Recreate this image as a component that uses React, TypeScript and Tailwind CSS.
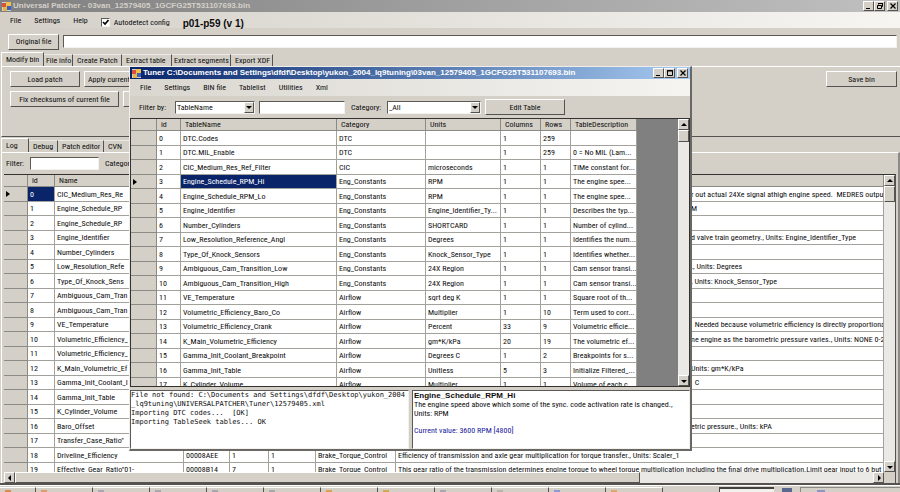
import type { ReactNode } from "react";

const RAISED =
  "border border-t-white border-l-white border-r-[#55534f] border-b-[#55534f] bg-[#d4d0c8]";
const SUNKEN =
  "border border-t-[#5c5a56] border-l-[#5c5a56] border-r-[#f4f2ee] border-b-[#f4f2ee] bg-white";

type PatchRow = {
  id: number;
  name: string;
  address?: string;
  columns?: string;
  rows?: string;
  category?: string;
  description?: string;
  tail?: string;
};

const patchRows: PatchRow[] = [
  { id: 0, name: "CIC_Medium_Res_Re", tail: "r out actual 24Xe signal athigh engine speed.  MEDRES outpu" },
  { id: 1, name: "Engine_Schedule_RP", tail: "M" },
  { id: 2, name: "Engine_Schedule_RP" },
  { id: 3, name: "Engine_Identifier", tail: "d valve train geometry., Units: Engine_Identifier_Type" },
  { id: 4, name: "Number_Cylinders" },
  { id: 5, name: "Low_Resolution_Refe", tail: "., Units: Degrees" },
  { id: 6, name: "Type_Of_Knock_Sens", tail: ", Units: Knock_Sensor_Type" },
  { id: 7, name: "Ambiguous_Cam_Tran" },
  { id: 8, name: "Ambiguous_Cam_Tran" },
  { id: 9, name: "VE_Temperature", tail: "  Needed because volumetric efficiency is directly proportiona" },
  { id: 10, name: "Volumetric_Efficiency_", tail: "ne engine as the barometric pressure varies., Units: NONE 0-2" },
  { id: 11, name: "Volumetric_Efficiency_" },
  { id: 12, name: "K_Main_Volumetric_Ef", tail: "Units: gm*K/kPa" },
  { id: 13, name: "Gamma_Init_Coolant_I", tail: "  C" },
  { id: 14, name: "Gamma_Init_Table" },
  { id: 15, name: "K_Cylinder_Volume" },
  { id: 16, name: "Baro_Offset", tail: "etric pressure., Units: kPA" },
  { id: 17, name: 'Transfer_Case_Ratio"' },
  {
    id: 18,
    name: "Driveline_Efficiency",
    address: "00008AEE",
    columns: "1",
    rows: "1",
    category: "Brake_Torque_Control",
    description:
      "Efficiency of transmission and axle gear multiplication for torque transfer., Units: Scaler_1",
  },
  {
    id: 19,
    name: 'Effective_Gear_Ratio"01-',
    address: "00008B14",
    columns: "7",
    rows: "1",
    category: "Brake_Torque_Control",
    description:
      "This gear ratio of the transmission determines engine torque to wheel torque multiplication including the final drive multiplication.Limit gear input to 6 but include",
  },
];

const tunerRows: string[][] = [
  ["0", "DTC.Codes", "DTC", "", "1", "259", ""],
  ["1", "DTC.MIL_Enable", "DTC", "", "1", "259", "0 = No MIL (Lam..."],
  ["2", "CIC_Medium_Res_Ref_Filter", "CIC", "microseconds", "1", "1", "TiMe constant for..."],
  ["3", "Engine_Schedule_RPM_Hi", "Eng_Constants", "RPM", "1", "1", "The engine spee..."],
  ["4", "Engine_Schedule_RPM_Lo", "Eng_Constants", "RPM", "1", "1", "The engine spee..."],
  ["5", "Engine_Identifier", "Eng_Constants", "Engine_Identifier_Ty...", "1", "1", "Describes the typ..."],
  ["6", "Number_Cylinders", "Eng_Constants", "SHORTCARD", "1", "1", "Number of cylind..."],
  ["7", "Low_Resolution_Reference_Angl", "Eng_Constants", "Degrees", "1", "1", "Identifies the num..."],
  ["8", "Type_Of_Knock_Sensors", "Eng_Constants", "Knock_Sensor_Type", "1", "1", "Identifies whether..."],
  ["9", "Ambiguous_Cam_Transition_Low", "Eng_Constants", "24X Region", "1", "1", "Cam sensor transi..."],
  ["10", "Ambiguous_Cam_Transition_High", "Eng_Constants", "24X Region", "1", "1", "Cam sensor transi..."],
  ["11", "VE_Temperature", "Airflow", "sqrt deg K", "1", "1", "Square root of th..."],
  ["12", "Volumetric_Efficiency_Baro_Co", "Airflow", "Multiplier", "1", "10", "Term used to corr..."],
  ["13", "Volumetric_Efficiency_Crank", "Airflow", "Percent", "33", "9", "Volumetric efficie..."],
  ["14", "K_Main_Volumetric_Efficiency", "Airflow", "gm*K/kPa", "20", "19", "The volumetric ef..."],
  ["15", "Gamma_Init_Coolant_Breakpoint", "Airflow", "Degrees C", "1", "2", "Breakpoints for s..."],
  ["16", "Gamma_Init_Table", "Airflow", "Unitless", "5", "3", "Initialize Filtered_..."],
  ["17", "K_Cylinder_Volume", "Airflow", "Multiplier", "1", "1", "Volume of each c..."],
];

function AppIcon() {
  return (
    <svg viewBox="0 0 9 9" className="size-[9px] shrink-0" aria-hidden="true">
      <rect x="0" y="0" width="9" height="9" fill="#c9cfe0" />
      <rect x="0" y="1" width="4" height="4" fill="#d9503c" />
      <rect x="4" y="0" width="5" height="5" fill="#f0c04a" />
      <rect x="1" y="5" width="4" height="4" fill="#e9b63c" />
      <rect x="5" y="4" width="4" height="4" fill="#3b62c0" />
    </svg>
  );
}

function WindowButton({ label, children }: { label: string; children: ReactNode }) {
  return (
    <button aria-label={label} className={`flex h-[10px] w-[11px] items-center justify-center ${RAISED}`}>
      <svg viewBox="0 0 8 8" className="size-2" fill="none" stroke="#000" aria-hidden="true">
        {children}
      </svg>
    </button>
  );
}

function WindowButtons({ restore = false }: { restore?: boolean }) {
  return (
    <div className="ml-auto flex pr-[2px]">
      <WindowButton label="Minimize">
        <path d="M1 6.5h4" />
      </WindowButton>
      {restore ? (
        <WindowButton label="Restore">
          <path d="M2.5 2.5v-1h4v3h-1M1.5 3.5h4v3h-4zM2 1.5h5" />
        </WindowButton>
      ) : (
        <WindowButton label="Maximize">
          <path d="M1.5 1.5h5v5h-5zM1 2h6" />
        </WindowButton>
      )}
      <div className="ml-[2px]">
        <WindowButton label="Close">
          <path d="M1.5 1.5l5 5M6.5 1.5l-5 5" strokeWidth="1.2" />
        </WindowButton>
      </div>
    </div>
  );
}

function Arrow({ dir }: { dir: "up" | "down" | "left" | "right" }) {
  const d = {
    up: "M0 4l3-3 3 3z",
    down: "M0 2l3 3 3-3z",
    left: "M4 0L1 3l3 3z",
    right: "M2 0l3 3-3 3z",
  }[dir];
  return (
    <svg viewBox="0 0 6 6" className="size-[6px]" fill="#000" aria-hidden="true">
      <path d={d} />
    </svg>
  );
}

function ScrollButton({ dir }: { dir: "up" | "down" | "left" | "right" }) {
  return (
    <button aria-label={`Scroll ${dir}`} className={`flex size-[11px] shrink-0 items-center justify-center ${RAISED}`}>
      <Arrow dir={dir} />
    </button>
  );
}

function PushButton({ children, className }: { children?: ReactNode; className: string }) {
  return (
    <button className={`h-4 shrink-0 overflow-hidden text-center leading-[13px] whitespace-nowrap ${RAISED} ${className}`}>
      {children}
    </button>
  );
}

function Menu({ items }: { items: string[] }) {
  return (
    <>
      {items.map((item) => (
        <button key={item}>{item}</button>
      ))}
    </>
  );
}

function Tab({ children, active = false, className = "" }: { children: ReactNode; active?: boolean; className?: string }) {
  return (
    <button
      role="tab"
      aria-selected={active}
      className={`pl-1 text-left whitespace-nowrap border-r border-r-[#55534f] ${
        active ? "h-[14px] border-t border-l border-t-white border-l-white" : "h-3 border-t border-t-[#eceae6]"
      } ${className}`}
    >
      {children}
    </button>
  );
}

function Combo({ id, value, className }: { id: string; value: string; className: string }) {
  return (
    <div className={`relative h-[13px] ${SUNKEN} ${className}`}>
      <select id={id} defaultValue={value} className="block h-[11px] w-full appearance-none bg-transparent pl-px leading-[11px] outline-none">
        <option>{value}</option>
      </select>
      <span className={`pointer-events-none absolute top-0 right-0 flex h-[11px] w-[10px] items-center justify-center ${RAISED}`}>
        <Arrow dir="down" />
      </span>
    </div>
  );
}

const HEAD = "h-3 overflow-hidden border-r border-b border-[#8c8a85] bg-[#d4d0c8] p-0 pl-1 text-left font-normal leading-[11px] whitespace-nowrap";
const CELL = "overflow-hidden border-r border-b border-[#a3a19c] p-0 pl-[2px] leading-[13px] whitespace-pre";
const GUTTER = "border-r border-b border-[#8c8a85] bg-[#d4d0c8] p-0 leading-[13px]";

function RowMarker() {
  return (
    <svg viewBox="0 0 4 6" className="ml-[2px] block h-[6px] w-1" aria-label="Current row">
      <path d="M0 0l4 3-4 3z" fill="#000" />
    </svg>
  );
}

function PatchTable() {
  return (
    <table className="w-full table-fixed border-separate border-spacing-0">
      <colgroup>
        <col className="w-6" />
        <col className="w-[27px]" />
        <col className="w-[129px]" />
        <col className="w-[46px]" />
        <col className="w-[39px]" />
        <col className="w-[47px]" />
        <col className="w-20" />
        <col />
      </colgroup>
      <thead>
        <tr>
          <th className={HEAD} />
          <th className={HEAD}>id</th>
          <th className={HEAD}>Name</th>
          <th className={HEAD} colSpan={5} />
        </tr>
      </thead>
      <tbody>
        {patchRows.map((row) => (
          <tr key={row.id} className="odd:h-[15px] even:h-[14px]">
            <td className={GUTTER}>{row.id === 0 && <RowMarker />}</td>
            <td className={`${CELL} ${row.id === 0 ? "bg-[#0a246a] text-white" : ""}`}>{row.id}</td>
            <td className={CELL}>{row.name}</td>
            <td className={CELL}>{row.address}</td>
            <td className={CELL}>{row.columns}</td>
            <td className={CELL}>{row.rows}</td>
            <td className={CELL}>{row.category}</td>
            <td className={CELL}>
              {row.tail ? <span className="pl-[293px]">{row.tail}</span> : row.description}
            </td>
          </tr>
        ))}
      </tbody>
    </table>
  );
}

function TunerTable() {
  return (
    <table className="w-[506px] table-fixed border-separate border-spacing-0 bg-white">
      <colgroup>
        <col className="w-[26px]" />
        <col className="w-6" />
        <col className="w-[156px]" />
        <col className="w-[89px]" />
        <col className="w-[75px]" />
        <col className="w-10" />
        <col className="w-[30px]" />
        <col className="w-[66px]" />
      </colgroup>
      <thead>
        <tr>
          <th className={HEAD} />
          {["id", "TableName", "Category", "Units", "Columns", "Rows", "TableDescription"].map((h) => (
            <th key={h} className={HEAD}>{h}</th>
          ))}
        </tr>
      </thead>
      <tbody>
        {tunerRows.map((row) => (
          <tr key={row[0]} className="odd:h-[15px] even:h-[14px]">
            <td className={GUTTER}>{row[0] === "3" && <RowMarker />}</td>
            {row.map((value, i) => (
              <td key={i} className={`${CELL} ${row[0] === "3" && i === 1 ? "bg-[#0a246a] text-white" : ""}`}>
                {value}
              </td>
            ))}
          </tr>
        ))}
      </tbody>
    </table>
  );
}

function TunerWindow() {
  return (
    <section className="absolute top-[66px] left-[129px] flex h-[385px] w-[563px] flex-col border-t border-r-2 border-b-2 border-l border-t-[#f0eeea] border-r-[#6a6864] border-b-[#6a6864] border-l-[#f0eeea] bg-[#d4d0c8]">
      <header className="flex h-3 shrink-0 items-center gap-[2px] bg-linear-to-r from-[#0a246a] to-[#a6caf0] pl-[2px]">
        <AppIcon />
        <h2 className="font-['Liberation_Sans',Arial,sans-serif] text-[8px] leading-3 font-bold whitespace-nowrap text-white">
          Tuner C:\Documents and Settings\dfdf\Desktop\yukon_2004_lq9tuning\03van_12579405_1GCFG25T531107693.bin
        </h2>
        <WindowButtons />
      </header>
      <nav className="flex h-[17px] shrink-0 items-center gap-[13px] bg-linear-to-r from-[#d9d6cf] to-[#f5f4f1] pl-[10px]">
        <Menu items={["File", "Settings", "BIN file", "Tablelist", "Utilities", "Xml"]} />
      </nav>
      <div className="flex h-[22px] shrink-0 items-center pl-[9px]">
        <label htmlFor="filter-by" className="w-9">Filter by:</label>
        <Combo id="filter-by" value="TableName" className="w-[80px]" />
        <input aria-label="Filter text" className={`ml-1 h-[13px] w-[86px] ${SUNKEN}`} />
        <label htmlFor="category" className="ml-[6px] w-9">Category:</label>
        <Combo id="category" value="_All" className="w-[94px]" />
        <PushButton className="ml-1 w-[80px]">Edit Table</PushButton>
      </div>
      <div className="flex min-h-0 flex-1 border border-[#33322f] bg-[#808080]">
        <div className="min-w-0 flex-1 overflow-hidden">
          <TunerTable />
        </div>
        <div className="flex w-[11px] flex-col bg-[#ebe9e5]">
          <ScrollButton dir="up" />
          <div className={`h-3 ${RAISED}`} />
          <div className="flex-1" />
          <ScrollButton dir="down" />
        </div>
      </div>
      <div className="mt-[3px] flex h-[59px] shrink-0 gap-[3px]">
        <div className={`w-[279px] overflow-hidden font-['DejaVu_Sans_Mono','Liberation_Mono',monospace] text-[7px] leading-[9px] whitespace-pre ${SUNKEN}`}>
          {"File not found: C:\\Documents and Settings\\dfdf\\Desktop\\yukon_2004\n_lq9tuning\\UNIVERSALPATCHER\\Tuner\\12579405.xml\nImporting DTC codes...  [OK]\nImporting TableSeek tables... OK"}
        </div>
        <div className={`min-w-0 flex-1 pl-px leading-[9px] ${SUNKEN}`}>
          <h3 className="font-['Liberation_Sans',Arial,sans-serif] text-[8px] font-bold">Engine_Schedule_RPM_Hi</h3>
          <p>The engine speed above which some of the sync. code activation rate is changed.,</p>
          <p>Units: RPM</p>
          <p className="mt-2 text-[#2020a0]">Current value: 3600 RPM [4800]</p>
        </div>
      </div>
    </section>
  );
}

const TASK_ICONS = [
  "bg-[#e08a4a]", "bg-[#e09a6a]", "bg-[#a8a8b0]", "bg-[#a8a8b0]", "bg-[#a8a8b0]", "bg-[#a8a8b0]",
  "bg-[#e0a050]", "bg-[#d8a850]", "bg-[#a8a8b0]", "bg-[#b8b4ac]", "bg-[#8a9cd0]", "bg-[#e0a868]",
];

function Taskbar() {
  return (
    <footer className="flex h-[7px] shrink-0 items-end border-t border-white bg-[#d4d0c8]">
      {TASK_ICONS.map((color, i) => (
        <div key={i} className={`flex h-[5px] items-end border-t border-r border-t-white border-r-[#55534f] pl-[5px] ${i === 0 ? "w-9" : "w-[57px]"}`}>
          <span className={`h-[2px] w-[6px] ${color}`} />
        </div>
      ))}
      <div className="ml-14 h-[5px] w-[55px] border-t-2 border-l border-[#44423f] bg-[#f3f1ed]" />
      <div className="ml-2 h-1 w-[10px] bg-[#5a6890]" />
      <div className="ml-2 flex h-[5px] flex-1 items-end border-t border-l border-[#8c8a85] pl-4">
        <span className="h-[2px] w-2 bg-[#8f93c8]" />
      </div>
    </footer>
  );
}

export default function App() {
  return (
    <main className="relative flex h-screen flex-col overflow-hidden bg-[#d4d0c8] font-['Roboto_Condensed','Liberation_Sans_Narrow',Roboto,sans-serif] text-[8px] leading-[11px] text-[#0c0c0c]">
      <header className="flex h-3 shrink-0 items-center gap-[2px] bg-linear-to-r from-[#808080] to-[#c0c0c0] pl-[2px]">
        <AppIcon />
        <h1 className="font-['Liberation_Sans',Arial,sans-serif] text-[8px] leading-3 font-bold whitespace-nowrap text-[#d4d0c8]">
          Universal Patcher - 03van_12579405_1GCFG25T531107693.bin
        </h1>
        <WindowButtons restore />
      </header>
      <nav className="flex h-4 shrink-0 items-center gap-[13px] bg-linear-to-r from-[#d4d0c8] to-[#f6f5f2] pl-[10px]">
        <Menu items={["File", "Settings", "Help"]} />
        <label className="relative flex items-center gap-1 pt-1">
          <input type="checkbox" defaultChecked className={`peer size-[9px] appearance-none ${SUNKEN}`} />
          <svg viewBox="0 0 7 7" className="pointer-events-none invisible absolute left-px size-[7px] peer-checked:visible" fill="none" stroke="#000" strokeWidth="1.6" aria-hidden="true">
            <path d="M1 3l2 2 3.500-4" />
          </svg>
          Autodetect config
        </label>
        <strong className="pt-2 font-['Liberation_Sans',Arial,sans-serif] text-[10px] leading-3">p01-p59 (v 1)</strong>
      </nav>
      <div className="flex h-6 shrink-0 items-center gap-1 pt-[3px] pr-[3px] pl-2">
        <PushButton className="w-[51px]">Original file</PushButton>
        <input aria-label="Original file path" className={`h-[13px] min-w-0 flex-1 ${SUNKEN}`} />
      </div>
      <div role="tablist" className="flex h-[14px] shrink-0 items-end pl-px">
        <Tab active className="w-[43px]">Modify bin</Tab>
        <Tab className="w-[29px] pl-[2px]">File info</Tab>
        <Tab className="w-[49px]">Create Patch</Tab>
        <Tab className="w-[50px]">Extract table</Tab>
        <Tab className="w-[59px] pl-[2px]">Extract segments</Tab>
        <Tab className="w-[42px]">Export XDF</Tab>
      </div>
      <section className="ml-px flex h-[71px] shrink-0 flex-col gap-1 border-t border-b border-l border-t-white border-b-[#55534f] border-l-white pt-1 pr-[3px] pl-2">
        <div className="flex gap-1">
          <PushButton className="w-[70px]">Load patch</PushButton>
          <PushButton className="w-[100px] pl-[3px] text-left">Apply current patch</PushButton>
          <PushButton className="ml-auto w-[71px]">Save bin</PushButton>
        </div>
        <div className="flex gap-1">
          <PushButton className="w-[109px]">Fix checksums of current file</PushButton>
          <PushButton className="w-[60px]" />
        </div>
      </section>
      <div role="tablist" className="mt-px flex h-[14px] shrink-0 items-end pl-px">
        <Tab active className="w-[28px]">Log</Tab>
        <Tab className="w-[29px]">Debug</Tab>
        <Tab className="w-[46px]">Patch editor</Tab>
        <Tab className="w-[40px]">CVN</Tab>
      </div>
      <section className="ml-px flex min-h-0 flex-1 flex-col border-t border-r-2 border-l border-t-white border-r-[#8c8a85] border-l-white">
        <div className="flex h-[21px] shrink-0 items-center pl-1">
          <label htmlFor="filter" className="w-6">Filter:</label>
          <input id="filter" className={`h-[13px] w-[69px] ${SUNKEN}`} />
          <span className="ml-[6px]">Category:</span>
        </div>
        <div className="mr-[2px] ml-[2px] flex min-h-0 flex-1 flex-col border-t border-r border-t-[#33322f] border-r-[#55534f]">
          <div className="flex min-h-0 flex-1">
            <div className="min-w-0 flex-1 overflow-hidden bg-white">
              <PatchTable />
            </div>
            <div className="flex w-[11px] flex-col bg-[#ebe9e5]">
              <ScrollButton dir="up" />
              <div className={`h-4 ${RAISED}`} />
              <div className="flex-1" />
              <ScrollButton dir="down" />
            </div>
          </div>
          <div className="flex h-[11px] shrink-0 bg-[#ebe9e5]">
            <ScrollButton dir="left" />
            <div className={`w-[625px] ${RAISED}`} />
            <div className="flex-1" />
            <ScrollButton dir="right" />
            <div className="w-[11px] bg-[#d4d0c8]" />
          </div>
        </div>
      </section>
      <div className="h-[2px] shrink-0 bg-[#55534f]" />
      <Taskbar />
      <TunerWindow />
    </main>
  );
}
